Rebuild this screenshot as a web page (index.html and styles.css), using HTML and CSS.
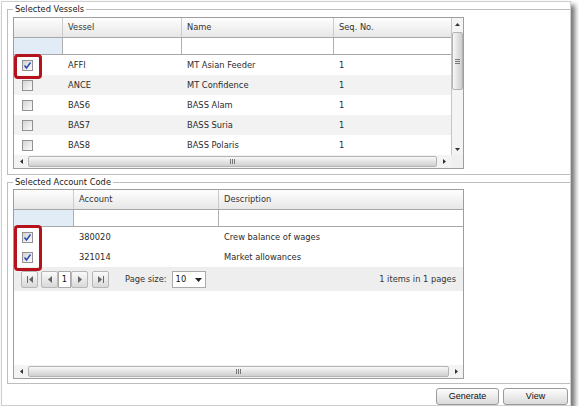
FILE: index.html
```html
<!DOCTYPE html>
<html>
<head>
<meta charset="utf-8">
<link rel="stylesheet" href="styles.css">
</head>
<body>
<div class="window">
  <fieldset class="group group-vessels">
    <legend>Selected Vessels</legend>
    <div class="grid grid-vessels">
      <div class="grid-main">
        <div class="grid-body">
          <div class="row head">
            <div class="cell"></div><div class="cell">Vessel</div><div class="cell">Name</div><div class="cell">Seq. No.</div>
          </div>
          <div class="row filter">
            <div class="cell sel"></div><div class="cell"></div><div class="cell"></div><div class="cell"></div>
          </div>
          <div class="row data">
            <div class="cell chk"><span class="cb"><svg width="9" height="9" viewBox="0 0 9 9"><path d="M1.5 4.5 L3.5 7 L7.5 1.5" fill="none" stroke="#2547b3" stroke-width="1.4"/></svg></span></div>
            <div class="cell">AFFI</div><div class="cell">MT Asian Feeder</div><div class="cell">1</div>
          </div>
          <div class="row data alt">
            <div class="cell chk"><span class="cb"></span></div>
            <div class="cell">ANCE</div><div class="cell">MT Confidence</div><div class="cell">1</div>
          </div>
          <div class="row data">
            <div class="cell chk"><span class="cb"></span></div>
            <div class="cell">BAS6</div><div class="cell">BASS Alam</div><div class="cell">1</div>
          </div>
          <div class="row data alt">
            <div class="cell chk"><span class="cb"></span></div>
            <div class="cell">BAS7</div><div class="cell">BASS Suria</div><div class="cell">1</div>
          </div>
          <div class="row data">
            <div class="cell chk"><span class="cb"></span></div>
            <div class="cell">BAS8</div><div class="cell">BASS Polaris</div><div class="cell">1</div>
          </div>
        </div>
        <div class="vscroll">
          <div class="varrow up"><svg width="5" height="3" viewBox="0 0 5 3"><path d="M0 3H5L2.5 0Z" fill="#333"/></svg></div>
          <div class="vthumb"><svg width="5" height="5" viewBox="0 0 5 5"><path d="M0 0.5H5M0 2.5H5M0 4.5H5" stroke="#777" stroke-width="1"/></svg></div>
          <div class="vspace"></div>
          <div class="varrow down"><svg width="5" height="3" viewBox="0 0 5 3"><path d="M0 0H5L2.5 3Z" fill="#333"/></svg></div>
        </div>
      </div>
      <div class="hbar">
        <div class="hscroll">
          <div class="harrow"><svg width="3" height="5" viewBox="0 0 3 5"><path d="M3 0V5L0 2.5Z" fill="#333"/></svg></div>
          <div class="hthumb"><svg width="5" height="5" viewBox="0 0 5 5"><path d="M0.5 0V5M2.5 0V5M4.5 0V5" stroke="#777" stroke-width="1"/></svg></div>
          <div class="harrow"><svg width="3" height="5" viewBox="0 0 3 5"><path d="M0 0V5L3 2.5Z" fill="#333"/></svg></div>
        </div>
        <div class="corner"></div>
      </div>
      <div class="mark mark-vessels"></div>
    </div>
  </fieldset>

  <fieldset class="group group-codes">
    <legend>Selected Account Code</legend>
    <div class="grid grid-codes">
      <div class="grid-body">
        <div class="row head">
          <div class="cell"></div><div class="cell">Account</div><div class="cell">Description</div>
        </div>
        <div class="row filter">
          <div class="cell sel"></div><div class="cell"></div><div class="cell"></div>
        </div>
        <div class="row data">
          <div class="cell chk"><span class="cb"><svg width="9" height="9" viewBox="0 0 9 9"><path d="M1.5 4.5 L3.5 7 L7.5 1.5" fill="none" stroke="#2547b3" stroke-width="1.4"/></svg></span></div>
          <div class="cell">380020</div><div class="cell">Crew balance of wages</div>
        </div>
        <div class="row data">
          <div class="cell chk"><span class="cb"><svg width="9" height="9" viewBox="0 0 9 9"><path d="M1.5 4.5 L3.5 7 L7.5 1.5" fill="none" stroke="#2547b3" stroke-width="1.4"/></svg></span></div>
          <div class="cell">321014</div><div class="cell">Market allowances</div>
        </div>
        <div class="pager">
          <div class="pbtn"><svg width="6" height="7" viewBox="0 0 6 7"><rect x="0" y="0" width="1" height="7" fill="#666"/><path d="M6 0V7L2 3.5Z" fill="#666"/></svg></div>
          <div class="pbtn prev"><svg width="4" height="7" viewBox="0 0 4 7"><path d="M4 0V7L0 3.5Z" fill="#666"/></svg></div>
          <div class="page">1</div>
          <div class="pbtn"><svg width="4" height="7" viewBox="0 0 4 7"><path d="M0 0V7L4 3.5Z" fill="#666"/></svg></div>
          <div class="pbtn last"><svg width="6" height="7" viewBox="0 0 6 7"><path d="M0 0V7L4 3.5Z" fill="#666"/><rect x="5" y="0" width="1" height="7" fill="#666"/></svg></div>
          <div class="psize">Page size:</div>
          <div class="select"><span class="select-val">10</span><span class="select-arrow"><svg width="7" height="4" viewBox="0 0 7 4"><path d="M0 0H7L3.5 4Z" fill="#222"/></svg></span></div>
          <div class="pinfo">1 items in 1 pages</div>
        </div>
      </div>
      <div class="hbar">
        <div class="hscroll">
          <div class="harrow"><svg width="3" height="5" viewBox="0 0 3 5"><path d="M3 0V5L0 2.5Z" fill="#333"/></svg></div>
          <div class="hthumb"><svg width="5" height="5" viewBox="0 0 5 5"><path d="M0.5 0V5M2.5 0V5M4.5 0V5" stroke="#777" stroke-width="1"/></svg></div>
          <div class="harrow"><svg width="3" height="5" viewBox="0 0 3 5"><path d="M0 0V5L3 2.5Z" fill="#333"/></svg></div>
        </div>
      </div>
      <div class="mark mark-codes"></div>
    </div>
  </fieldset>

  <div class="actions">
    <div class="btn btn-generate">Generate</div>
    <div class="btn btn-view">View</div>
  </div>
</div>
</body>
</html>
```

FILE: styles.css
```css
* { box-sizing: border-box; }
body {
  margin: 0;
  background: #fff;
  font-family: "DejaVu Sans", Verdana, sans-serif;
  font-size: 8.3px;
  color: #2b2b2b;
}
.window {
  margin: 1px 0 0 1px;
  width: 570px;
  height: 405px;
  border: 1px solid #cfcfcf;
  background: #fff;
  box-shadow: 4px 4px 5px rgba(0, 0, 0, 0.55);
  padding: 2px 0 0 5px;
  display: flex;
  flex-direction: column;
}
.group {
  margin: 0;
  padding: 0 0 5px 5px;
  border: 1px solid #bdbdbd;
  border-right: none;
  min-width: 0;
}
.group-codes { margin-top: 2px; padding-bottom: 4px; }
legend {
  padding: 0 2px;
  margin: 0;
  height: 10px;
  line-height: 10px;
  font-size: 8.3px;
  color: #222;
}
.grid {
  position: relative;
  margin-top: 2px;
  width: 451px;
  border: 1px solid #9e9e9e;
  display: flex;
  flex-direction: column;
  background: #fff;
}
.grid-vessels { height: 152px; margin-top: 3px; }
.grid-codes { height: 190px; }
.grid-main { display: flex; height: 137px; }
.grid-body { width: 437px; overflow: hidden; }
.grid-codes .grid-body { width: 449px; flex: 1; display: flex; flex-direction: column; }
.row { display: grid; }
.grid-vessels .row { grid-template-columns: 49px 119px 152px 117px; }
.grid-codes .row { grid-template-columns: 60px 145px 244px; }
.cell { padding-left: 5px; white-space: nowrap; overflow: hidden; }
.head {
  height: 20px;
  line-height: 19px;
  border-bottom: 1px solid #a8a8a8;
  background: linear-gradient(#fefefe, #e7e7e7);
  color: #333;
}
.head .cell { border-right: 1px solid #cbcbcb; }
.head .cell:last-child { border-right: none; }
.filter { height: 17px; border-bottom: 1px solid #a8a8a8; }
.filter .cell { border-right: 1px solid #b0b0b0; }
.filter .cell:last-child { border-right: none; }
.filter .sel { background: #e2ecf7; }
.data { height: 20px; line-height: 20px; }
.data.alt { background: #f2f2f2; }
.chk { padding-left: 8px; display: flex; align-items: center; }
.cb {
  width: 11px;
  height: 11px;
  border: 1px solid #929292;
  background: linear-gradient(135deg, #d4d4d4, #fbfbfb);
  display: flex;
  align-items: center;
  justify-content: center;
}
.vscroll {
  width: 12px;
  border-left: 1px solid #c6c6c6;
  background: #f4f4f4;
  display: flex;
  flex-direction: column;
}
.varrow { display: flex; align-items: center; justify-content: center; }
.varrow.up { height: 13px; }
.varrow.down { height: 12px; }
.vthumb {
  margin: 1px 0 0 0;
  height: 58px;
  border: 1px solid #b2b2b2;
  border-radius: 2px;
  background: linear-gradient(to right, #f8f8f8, #cdcdcd);
  display: flex;
  align-items: center;
  justify-content: center;
}
.vspace { flex: 1; }
.hbar { display: flex; height: 13px; }
.hscroll { width: 437px; display: flex; background: #f3f3f3; }
.grid-codes .hscroll { width: 449px; }
.harrow { width: 14px; display: flex; align-items: center; justify-content: center; }
.hthumb {
  flex: 1;
  margin: 1px 0;
  border: 1px solid #b4b4b4;
  border-radius: 2px;
  background: linear-gradient(#f8f8f8, #cfcfcf);
  display: flex;
  align-items: center;
  justify-content: center;
}
.corner { width: 12px; background: #efefef; }
.mark {
  position: absolute;
  left: 0;
  width: 28px;
  border: 3px solid #b5121b;
  border-radius: 4px;
}
.mark-vessels { top: 36px; height: 25px; }
.mark-codes { top: 35px; height: 46px; }
.pager {
  height: 24px;
  background: #eeeeee;
  display: flex;
  align-items: flex-start;
  padding: 4px 7px 0 7px;
  color: #333;
}
.pbtn {
  width: 17px;
  height: 17px;
  border: 1px solid #b7b7b7;
  border-radius: 2px;
  background: linear-gradient(#fafafa, #d9d9d9);
  display: flex;
  align-items: center;
  justify-content: center;
}
.pbtn.prev { margin-left: 3px; }
.pbtn.last { margin-left: 4px; }
.page {
  width: 13px;
  height: 17px;
  border: 1px solid #aaaaaa;
  background: #fff;
  text-align: center;
  line-height: 15px;
  color: #111;
}
.psize { margin-left: 16px; line-height: 17px; }
.select {
  margin-left: 5px;
  width: 34px;
  height: 17px;
  border: 1px solid #a9a9a9;
  background: #fff;
  display: flex;
}
.select-val { flex: 1; padding-left: 3px; line-height: 15px; color: #111; }
.select-arrow { width: 13px; display: flex; align-items: center; justify-content: center; }
.pinfo { margin-left: auto; line-height: 17px; }
.actions {
  display: flex;
  justify-content: flex-end;
  gap: 4px;
  margin-top: 4px;
  padding-right: 2px;
}
.btn {
  height: 17px;
  border: 1px solid #9b9b9b;
  border-radius: 3px;
  background: linear-gradient(#fdfdfd, #dadada);
  font-family: "Liberation Sans", Arial, sans-serif;
  font-size: 9px;
  color: #111;
  text-align: center;
  line-height: 15px;
}
.btn-generate { width: 63px; }
.btn-view { width: 65px; }
```
